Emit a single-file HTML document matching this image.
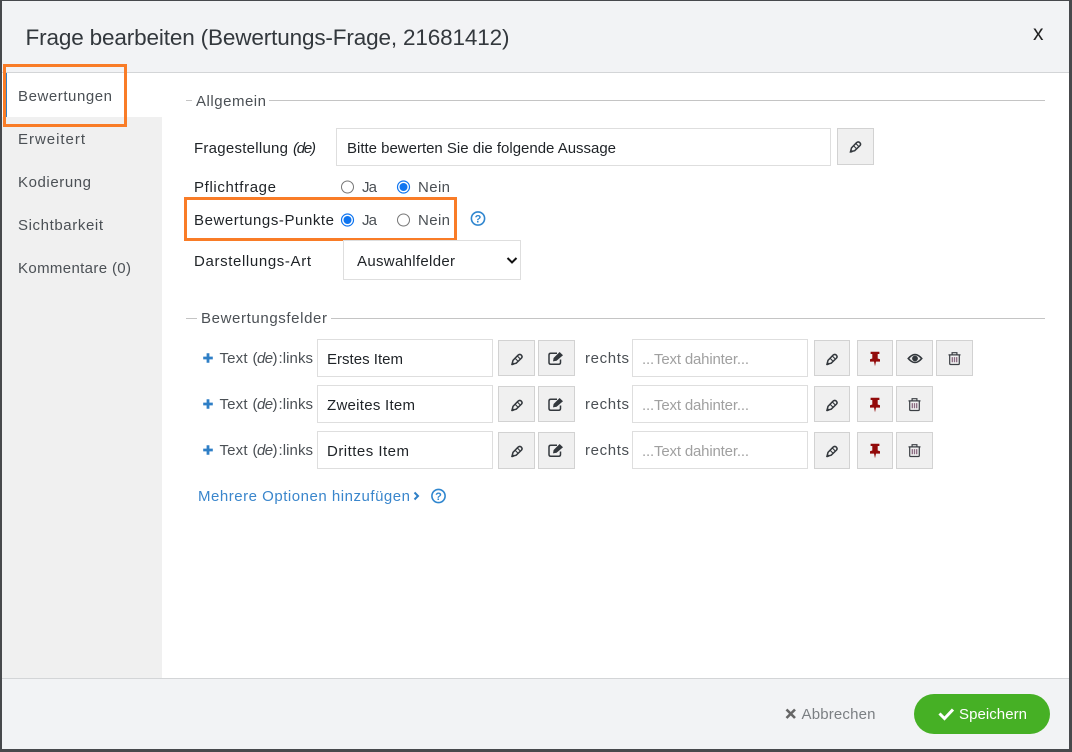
<!DOCTYPE html>
<html lang="de"><head><meta charset="utf-8"><title>Frage bearbeiten</title>
<style>
html,body{margin:0;padding:0;width:1072px;height:752px;overflow:hidden;background:#fff}
svg{display:block}
text{font-family:"Liberation Sans",sans-serif;font-size:15px;fill:#33383d}
.b{fill:#1f2327}
.g{fill:#4b5055}
.ph{fill:#a0a0a0}
.blue{fill:#3a86cc}
.box{fill:#fff;stroke:#dedede;stroke-width:1}
.btn{fill:#f0f0f0;stroke:#d2d2d2;stroke-width:1}
.or{fill:none;stroke:#f97c27;stroke-width:3}
</style></head><body>
<svg width="1072" height="752" viewBox="0 0 1072 752" xmlns="http://www.w3.org/2000/svg">
<defs>
<g id="pen" fill="none" stroke="#33383d"><path d="M-5 5.2 L-4 1.4 L1 -3.8 Q2.8 -5.4 4.4 -3.8 Q5.8 -2.2 4.2 -0.6 L-0.8 4.2 Z" stroke-width="1.5"/><path d="M-1.8 -0.6 L0.8 2 M0.6 -2.8 L3 -0.2" stroke-width="1.1"/><path d="M-5.2 5.4 L-3 4.6" stroke-width="2"/></g>
<g id="edit"><path d="M4.5 1.5 V4.5 Q4.5 6.3 2.7 6.3 H-5.2 Q-7 6.3 -7 4.5 V-3 Q-7 -4.8 -5.2 -4.8 H1" fill="none" stroke="#33383d" stroke-width="1.5"/><path d="M-3 3.4 L-2.4 0 L3.6 -6 L7 -2.8 L0.6 2.8 Z" fill="#33383d"/></g>
<g id="pin"><path d="M-4.4 -6.2 H4.4 V-4 H2.7 V0.5 L5 1.2 V3.6 H1 L0 8.2 L-1 3.6 H-5 V1.2 L-2.7 0.5 V-4 H-4.4 Z" fill="#920a0a"/></g>
<g id="eye"><path d="M-7.8 0 Q0 -9.5 7.8 0 Q0 9.5 -7.8 0 Z" fill="#33383d"/><path d="M-5.6 0 Q0 -6.6 5.6 0 Q0 6.6 -5.6 0 Z" fill="#e8e8e8"/><circle r="2.9" fill="#33383d"/></g>
<g id="trash" fill="none" stroke-width="1.2"><path d="M-6 -3.6 H6 M-2.4 -3.6 V-5.8 H2.4 V-3.6" stroke="#3b3f44"/><path d="M-4.8 -3.4 V5 Q-4.8 6 -3.8 6 H3.8 Q4.8 6 4.8 5 V-3.4" stroke="#3b3f44"/><path d="M-2.2 -1.4 V3.8 M0 -1.4 V3.8 M2.2 -1.4 V3.8" stroke="#8a6a80" stroke-width="1.3"/></g>
<g id="q" fill="none"><circle r="6.6" stroke="#2f86cf" stroke-width="1.6"/><text x="0" y="3.9" text-anchor="middle" style="font-size:11px;font-weight:bold;fill:#2f86cf">?</text></g>
<path id="plus" d="M-1.4 -4.8 H1.4 V-1.4 H4.8 V1.4 H1.4 V4.8 H-1.4 V1.4 H-4.8 V-1.4 H-1.4 Z" fill="#2f7fc6"/>
</defs>

<!-- frame -->
<rect width="1072" height="752" fill="#47494c"/>
<rect x="2" y="1" width="1067" height="748" fill="#fff"/>
<rect x="2" y="1" width="1067" height="71" fill="#f2f3f5"/>
<rect x="2" y="72" width="1067" height="1" fill="#d3d5d7"/>
<text x="25.5" y="45" textLength="484" lengthAdjust="spacing" style="font-size:22.5px;fill:#33383d">Frage bearbeiten (Bewertungs-Frage, 21681412)</text>
<text x="1033" y="40" style="font-size:21px;fill:#222">x</text>

<!-- sidebar -->
<rect x="2" y="117" width="160" height="561" fill="#f0f0f0"/>
<rect x="5" y="73" width="2" height="44" fill="#2f80c8"/>
<text x="18" y="101" textLength="94" lengthAdjust="spacing" class="g">Bewertungen</text>
<text x="18" y="144" textLength="67" lengthAdjust="spacing" class="g">Erweitert</text>
<text x="18" y="187" textLength="73" lengthAdjust="spacing" class="g">Kodierung</text>
<text x="18" y="230" textLength="85" lengthAdjust="spacing" class="g">Sichtbarkeit</text>
<text x="18" y="273" textLength="113" lengthAdjust="spacing" class="g">Kommentare (0)</text>
<rect x="4.5" y="65.5" width="121" height="60" class="or"/>

<!-- Allgemein -->
<rect x="186" y="100" width="6" height="1" fill="#c4c4c4"/>
<rect x="269" y="100" width="776" height="1" fill="#c4c4c4"/>
<text x="196" y="106" textLength="70" lengthAdjust="spacing" class="g">Allgemein</text>

<text x="194" y="153" textLength="94" lengthAdjust="spacing" class="b">Fragestellung</text>
<text x="293" y="153" textLength="23" lengthAdjust="spacing" class="b" style="font-style:italic">(de)</text>
<rect x="336.5" y="128.5" width="494" height="37" class="box"/>
<text x="347" y="153" textLength="269" lengthAdjust="spacing" class="b">Bitte bewerten Sie die folgende Aussage</text>
<rect x="837.5" y="128.5" width="36" height="36" class="btn"/>
<use href="#pen" x="855.5" y="146.5"/>

<text x="194" y="192" textLength="82" lengthAdjust="spacing" class="b">Pflichtfrage</text>
<circle cx="347.5" cy="187" r="6" fill="#fff" stroke="#767676"/>
<text x="362" y="192" textLength="15" lengthAdjust="spacing" class="g">Ja</text>
<circle cx="403.5" cy="187" r="6" fill="#fff" stroke="#0f75f0" stroke-width="1.2"/><circle cx="403.5" cy="187" r="4" fill="#0f75f0"/>
<text x="418" y="192" textLength="32" lengthAdjust="spacing" class="g">Nein</text>

<text x="194" y="225" textLength="140" lengthAdjust="spacing" class="b">Bewertungs-Punkte</text>
<circle cx="347.5" cy="220" r="6" fill="#fff" stroke="#0f75f0" stroke-width="1.2"/><circle cx="347.5" cy="220" r="4" fill="#0f75f0"/>
<text x="362" y="225" textLength="15" lengthAdjust="spacing" class="g">Ja</text>
<circle cx="403.5" cy="220" r="6" fill="#fff" stroke="#767676"/>
<text x="418" y="225" textLength="32" lengthAdjust="spacing" class="g">Nein</text>
<use href="#q" x="478" y="218.5"/>
<rect x="185.5" y="198.5" width="270" height="41" class="or"/>

<text x="194" y="266" textLength="117" lengthAdjust="spacing" class="b">Darstellungs-Art</text>
<rect x="343.5" y="240.5" width="177" height="39" class="box"/>
<text x="357" y="266" textLength="98" lengthAdjust="spacing" class="b">Auswahlfelder</text>
<path d="M507.5 258 L512 262.5 L516.5 258" fill="none" stroke="#111" stroke-width="2"/>

<!-- Bewertungsfelder -->
<rect x="186" y="318" width="11" height="1" fill="#c4c4c4"/>
<rect x="331" y="318" width="714" height="1" fill="#c4c4c4"/>
<text x="201" y="323" textLength="126" lengthAdjust="spacing" class="g">Bewertungsfelder</text>

<!-- row 1 -->
<use href="#plus" x="208" y="358"/>
<text x="219.5" y="363" textLength="28" lengthAdjust="spacing" class="g">Text</text>
<text x="252.5" y="363" textLength="25" lengthAdjust="spacing" class="g"><tspan>(</tspan><tspan style="font-style:italic">de</tspan><tspan>)</tspan></text>
<text x="278.5" y="363" textLength="34.5" lengthAdjust="spacing" class="g">:links</text>
<rect x="317.5" y="339.5" width="175" height="37" class="box"/>
<text x="327" y="364" textLength="76" lengthAdjust="spacing" class="b">Erstes Item</text>
<rect x="498.5" y="340.5" width="36" height="35" class="btn"/><use href="#pen" x="517" y="359"/>
<rect x="538.5" y="340.5" width="36" height="35" class="btn"/><use href="#edit" x="556" y="358"/>
<text x="585" y="363" textLength="44" lengthAdjust="spacing" class="g">rechts</text>
<rect x="632.5" y="339.5" width="175" height="37" class="box"/>
<text x="642" y="364" textLength="107" lengthAdjust="spacing" class="ph">...Text dahinter...</text>
<rect x="814.5" y="340.5" width="35" height="35" class="btn"/><use href="#pen" x="832" y="359"/>
<rect x="857.5" y="340.5" width="35" height="35" class="btn"/><use href="#pin" x="875" y="358"/>
<rect x="896.5" y="340.5" width="36" height="35" class="btn"/><use href="#eye" x="915" y="358.5"/>
<rect x="936.5" y="340.5" width="36" height="35" class="btn"/><use href="#trash" x="954.5" y="358.5"/>

<!-- row 2 -->
<use href="#plus" x="208" y="404"/>
<text x="219.5" y="409" textLength="28" lengthAdjust="spacing" class="g">Text</text>
<text x="252.5" y="409" textLength="25" lengthAdjust="spacing" class="g"><tspan>(</tspan><tspan style="font-style:italic">de</tspan><tspan>)</tspan></text>
<text x="278.5" y="409" textLength="34.5" lengthAdjust="spacing" class="g">:links</text>
<rect x="317.5" y="385.5" width="175" height="37" class="box"/>
<text x="327" y="410" textLength="88" lengthAdjust="spacing" class="b">Zweites Item</text>
<rect x="498.5" y="386.5" width="36" height="35" class="btn"/><use href="#pen" x="517" y="405"/>
<rect x="538.5" y="386.5" width="36" height="35" class="btn"/><use href="#edit" x="556" y="404"/>
<text x="585" y="409" textLength="44" lengthAdjust="spacing" class="g">rechts</text>
<rect x="632.5" y="385.5" width="175" height="37" class="box"/>
<text x="642" y="410" textLength="107" lengthAdjust="spacing" class="ph">...Text dahinter...</text>
<rect x="814.5" y="386.5" width="35" height="35" class="btn"/><use href="#pen" x="832" y="405"/>
<rect x="857.5" y="386.5" width="35" height="35" class="btn"/><use href="#pin" x="875" y="404"/>
<rect x="896.5" y="386.5" width="36" height="35" class="btn"/><use href="#trash" x="914.5" y="404.5"/>

<!-- row 3 -->
<use href="#plus" x="208" y="450"/>
<text x="219.5" y="455" textLength="28" lengthAdjust="spacing" class="g">Text</text>
<text x="252.5" y="455" textLength="25" lengthAdjust="spacing" class="g"><tspan>(</tspan><tspan style="font-style:italic">de</tspan><tspan>)</tspan></text>
<text x="278.5" y="455" textLength="34.5" lengthAdjust="spacing" class="g">:links</text>
<rect x="317.5" y="431.5" width="175" height="37" class="box"/>
<text x="327" y="456" textLength="82" lengthAdjust="spacing" class="b">Drittes Item</text>
<rect x="498.5" y="432.5" width="36" height="36" class="btn"/><use href="#pen" x="517" y="451"/>
<rect x="538.5" y="432.5" width="36" height="36" class="btn"/><use href="#edit" x="556" y="450"/>
<text x="585" y="455" textLength="44" lengthAdjust="spacing" class="g">rechts</text>
<rect x="632.5" y="431.5" width="175" height="37" class="box"/>
<text x="642" y="456" textLength="107" lengthAdjust="spacing" class="ph">...Text dahinter...</text>
<rect x="814.5" y="432.5" width="35" height="36" class="btn"/><use href="#pen" x="832" y="451"/>
<rect x="857.5" y="432.5" width="35" height="36" class="btn"/><use href="#pin" x="875" y="450"/>
<rect x="896.5" y="432.5" width="36" height="36" class="btn"/><use href="#trash" x="914.5" y="450.5"/>

<text x="198" y="501" textLength="212" lengthAdjust="spacing" class="blue">Mehrere Optionen hinzufügen</text>
<path d="M414.5 492.5 L418 496 L414.5 499.5" fill="none" stroke="#2f7fc6" stroke-width="2"/>
<use href="#q" x="438.5" y="496"/>

<!-- footer -->
<rect x="2" y="678" width="1067" height="71" fill="#f2f3f5"/>
<rect x="2" y="678" width="1067" height="1" fill="#d3d5d7"/>
<path d="M786.5 709.5 L795 718 M795 709.5 L786.5 718" stroke="#666" stroke-width="2.6" fill="none"/>
<text x="801.5" y="719" textLength="74" lengthAdjust="spacing" style="fill:#7b7f83">Abbrechen</text>
<rect x="914" y="694" width="136" height="40" rx="20" fill="#46b025"/>
<path d="M939.5 713.5 L944.5 718.5 L953 709.5" fill="none" stroke="#fff" stroke-width="3"/>
<text x="959" y="719" textLength="68" lengthAdjust="spacing" style="fill:#fff">Speichern</text>
</svg>
</body></html>
